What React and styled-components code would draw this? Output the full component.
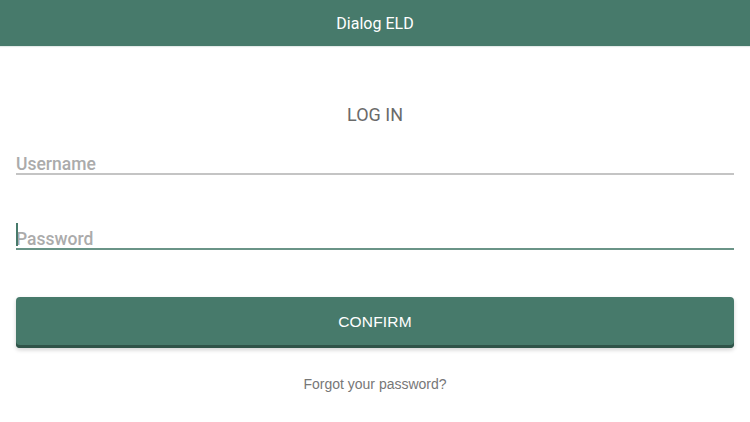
import styled, { createGlobalStyle } from "styled-components";

const GlobalStyle = createGlobalStyle`
  html, body {
    margin: 0;
    padding: 0;
    background: #ffffff;
  }
  * {
    box-sizing: border-box;
  }
`;

export default function App() {
  return (
    <>
      <GlobalStyle />
      <Page>
        <TopBar>
          <TopTitle>Dialog ELD</TopTitle>
        </TopBar>
        <Form>
          <Heading>LOG IN</Heading>
          <Field>
            <Input placeholder="Username" />
          </Field>
          <Field $active>
            <Caret />
            <Input type="password" placeholder="Password" />
          </Field>
          <ConfirmButton>CONFIRM</ConfirmButton>
          <ForgotLink>Forgot your password?</ForgotLink>
        </Form>
      </Page>
    </>
  );
}

const Page = styled.div`
  width: 750px;
  height: 422px;
  display: flex;
  flex-direction: column;
  background: #ffffff;
`;

const TopBar = styled.header`
  height: 46px;
  background-color: #477a6b;
  display: flex;
  align-items: center;
  justify-content: center;
  box-shadow: 0 1px 1px rgba(71, 122, 107, 0.15);
`;

const TopTitle = styled.h1`
  margin: 0;
  font-family: Roboto, sans-serif;
  font-weight: normal;
  font-size: 16px;
  color: #ffffff;
`;

const Form = styled.main`
  display: flex;
  flex-direction: column;
  padding: 0 16px;
`;

const Heading = styled.h2`
  margin: 58px 0 0;
  height: 24px;
  text-align: center;
  font-family: Roboto, sans-serif;
  font-weight: normal;
  font-size: 18px;
  color: #6a6a6a;
`;

const Field = styled.label`
  position: relative;
  display: block;
  margin-top: ${({ $active }) => ($active ? "46px" : "18px")};
  border-bottom: 2px solid ${({ $active }) => ($active ? "#6a9487" : "#c4c4c4")};
`;

const Input = styled.input`
  display: block;
  width: 100%;
  height: 27px;
  border: none;
  outline: none;
  padding: 9px 0 0;
  background: transparent;
  font-family: Roboto, sans-serif;
  font-weight: 500;
  font-size: 17.5px;
  color: #333333;

  &::placeholder {
    color: #ababab;
  }
`;

const Caret = styled.span`
  position: absolute;
  left: 0;
  top: 2px;
  width: 2px;
  height: 23px;
  background: #477a6b;
`;

const ConfirmButton = styled.button`
  margin-top: 47px;
  height: 51px;
  width: 100%;
  border: none;
  border-radius: 4px;
  background-color: #477a6b;
  box-shadow: inset 0 -3px 0 #2f5348, 0 2px 4px rgba(0, 0, 0, 0.18);
  color: #ffffff;
  font-family: "Liberation Sans", Arial, sans-serif;
  font-size: 15.5px;
  letter-spacing: 0.2px;
  padding-bottom: 2px;
  cursor: pointer;
`;

const ForgotLink = styled.a`
  margin-top: 28px;
  text-align: center;
  font-family: "Liberation Sans", Arial, sans-serif;
  font-size: 14px;
  color: #777777;
  cursor: pointer;
`;
